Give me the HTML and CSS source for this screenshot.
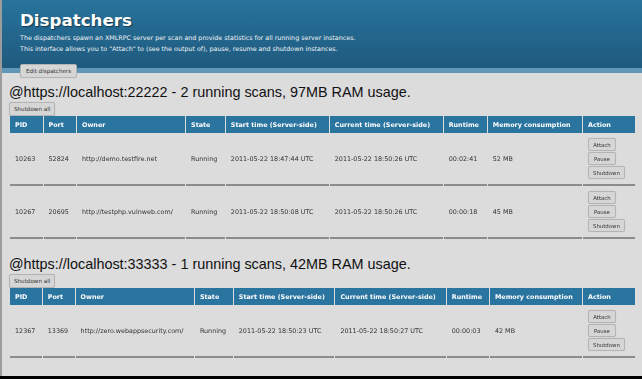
FILE: index.html
```html
<!DOCTYPE html>
<html lang="en">
<head>
  <meta charset="UTF-8">
  <title>Dispatchers</title>
  <link rel="stylesheet" href="styles.css">
</head>
<body>
  <div class="page">
    <div class="header">
      <h1>Dispatchers</h1>
      <p>The dispatchers spawn an XMLRPC server per scan and provide statistics for all running server instances.</p>
      <p>This interface allows you to "Attach" to (see the output of), pause, resume and shutdown instances.</p>
    </div>

    <div class="toolbar">
      <button class="btn">Edit dispatchers</button>
    </div>

    <!-- Dispatcher 22222 -->
    <div class="dispatcher">
      <h2>@https://localhost:22222 - 2 running scans, 97MB RAM usage.</h2>
      <button class="btn btn-all">Shutdown all</button>
      <table class="scans">
        <tr>
          <th>PID</th>
          <th>Port</th>
          <th>Owner</th>
          <th>State</th>
          <th>Start time (Server-side)</th>
          <th>Current time (Server-side)</th>
          <th>Runtime</th>
          <th>Memory consumption</th>
          <th>Action</th>
        </tr>
        <tr>
          <td>10263</td>
          <td>52824</td>
          <td>http://demo.testfire.net</td>
          <td>Running</td>
          <td>2011-05-22 18:47:44 UTC</td>
          <td>2011-05-22 18:50:26 UTC</td>
          <td>00:02:41</td>
          <td>52 MB</td>
          <td class="actions">
            <button class="btn btn-small">Attach</button>
            <button class="btn btn-small">Pause</button>
            <button class="btn btn-small">Shutdown</button>
          </td>
        </tr>
        <tr>
          <td>10267</td>
          <td>20695</td>
          <td>http://testphp.vulnweb.com/</td>
          <td>Running</td>
          <td>2011-05-22 18:50:08 UTC</td>
          <td>2011-05-22 18:50:26 UTC</td>
          <td>00:00:18</td>
          <td>45 MB</td>
          <td class="actions">
            <button class="btn btn-small">Attach</button>
            <button class="btn btn-small">Pause</button>
            <button class="btn btn-small">Shutdown</button>
          </td>
        </tr>
      </table>
    </div>

    <!-- Dispatcher 33333 -->
    <div class="dispatcher">
      <h2>@https://localhost:33333 - 1 running scans, 42MB RAM usage.</h2>
      <button class="btn btn-all">Shutdown all</button>
      <table class="scans">
        <tr>
          <th>PID</th>
          <th>Port</th>
          <th>Owner</th>
          <th>State</th>
          <th>Start time (Server-side)</th>
          <th>Current time (Server-side)</th>
          <th>Runtime</th>
          <th>Memory consumption</th>
          <th>Action</th>
        </tr>
        <tr>
          <td>12367</td>
          <td>13369</td>
          <td>http://zero.webappsecurity.com/</td>
          <td>Running</td>
          <td>2011-05-22 18:50:23 UTC</td>
          <td>2011-05-22 18:50:27 UTC</td>
          <td>00:00:03</td>
          <td>42 MB</td>
          <td class="actions">
            <button class="btn btn-small">Attach</button>
            <button class="btn btn-small">Pause</button>
            <button class="btn btn-small">Shutdown</button>
          </td>
        </tr>
      </table>
    </div>
  </div>
</body>
</html>
```

FILE: styles.css
```css
html {
  background-color: #000;
}
body {
  margin: 0;
  padding: 0;
  font-family: "DejaVu Sans", Verdana, sans-serif;
  color: #222;
}
.page {
  height: 376px;
  overflow: hidden;
  background-color: #dcdcdc;
  border-left: 2px solid #9c9c9c;
}
.header {
  height: 73px;
  box-sizing: border-box;
  padding: 10px 18px 0;
  background: linear-gradient(#27739c, #205a7e);
  border-bottom: 5px solid #6096b7;
  color: #eef3f6;
}
.header h1 {
  margin: 0;
  font-size: 16.7px;
  line-height: 20px;
  color: #fff;
  text-shadow: 1px 1px 1px rgba(0, 0, 0, 0.45);
}
.header p {
  margin: 2px 0 0;
  font-size: 6.35px;
  line-height: 11px;
}
.header p + p {
  margin-top: 0;
}
.toolbar {
  margin-top: -9px;
  padding-left: 18px;
}
.btn {
  display: block;
  font-family: "DejaVu Sans", Verdana, sans-serif;
  font-size: 5.6px;
  color: #333;
  background-color: #d6d6d6;
  border: 1px solid #b4b4b4;
  border-radius: 2px;
  box-shadow: 0 0 1px rgba(0, 0, 0, 0.15);
  padding: 0 5px;
  height: 14px;
  cursor: pointer;
}
.dispatcher {
  padding: 0 6px 0 7px;
}
.dispatcher h2 {
  margin: 5px 0 1px;
  font-family: "Liberation Sans", Arial, sans-serif;
  font-weight: normal;
  font-size: 14.4px;
  line-height: 18px;
  color: #111;
}
.dispatcher + .dispatcher h2 {
  margin-top: 16px;
}
.btn-all {
  padding: 0 4px;
}
.scans {
  width: 100%;
  border-collapse: separate;
  border-spacing: 1px 0;
  font-size: 6.4px;
  color: #333;
  will-change: transform;
}
.scans th {
  background-color: #2a74a0;
  color: #fff;
  text-align: left;
  font-weight: bold;
  height: 17px;
  padding: 0 5px;
  white-space: nowrap;
}
.scans td {
  padding: 5px 5px 4px;
  border-bottom: 2px solid #8c8c8c;
  white-space: nowrap;
  vertical-align: middle;
}
.actions {
  width: 42px;
}
.btn-small {
  font-size: 5.4px;
  height: 13px;
  min-width: 28px;
  padding: 0 4px;
  margin-bottom: 1px;
}
```
